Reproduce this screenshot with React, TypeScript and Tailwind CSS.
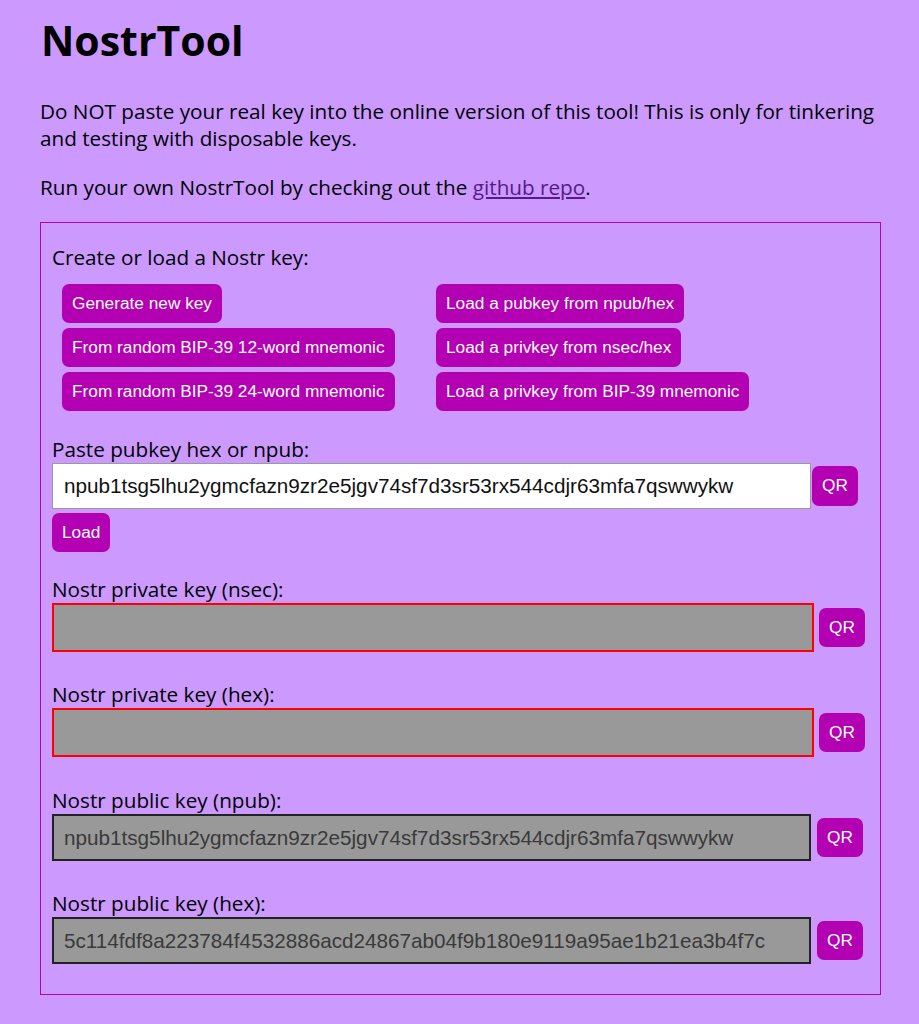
import React from "react";

const NPUB = "npub1tsg5lhu2ygmcfazn9zr2e5jgv74sf7d3sr53rx544cdjr63mfa7qswwykw";
const HEX = "5c114fdf8a223784f4532886acd24867ab04f9b180e9119a95ae1b21ea3b4f7c";

const btn =
	"inline-flex items-center rounded-[7px] bg-[#b300b3] px-[10px] text-[17.25px] text-white font-['Liberation_Sans',Arial,sans-serif] whitespace-nowrap";

const Btn = ({ label, className = "" }: { label: string; className?: string }) => (
	<button type="button" className={`${btn} h-[39px] ${className}`}>
		{label}
	</button>
);

const QrBtn = ({ className = "" }: { className?: string }) => (
	<button
		type="button"
		className={`${btn} h-[39px] w-[46px] justify-center px-0 text-[17.5px] ${className}`}
	>
		QR
	</button>
);

type KeyFieldProps = {
	label: string;
	value: string;
	kind: "private" | "public";
	mt: string;
};

const KeyField = ({ label, value, kind, mt }: KeyFieldProps) => {
	const isPrivate = kind === "private";
	return (
		<div className={mt}>
			<div className="leading-[27px]">{label}</div>
			<div className="flex items-center">
				<div
					className={`flex items-center bg-[#999999] pl-[10px] text-[20.7px] text-[#3a3a3a] font-['Liberation_Sans',Arial,sans-serif] border-2 ${
						isPrivate
							? "h-[49px] w-[762px] border-[#ff0000]"
							: "h-[47px] w-[759px] border-[#222222]"
					}`}
				>
					{value}
				</div>
				<QrBtn className={isPrivate ? "ml-[5px]" : "ml-[6px] w-[45px]"} />
			</div>
		</div>
	);
};

const App = () => {
	return (
		<div className="min-h-screen bg-[#cc99ff] px-[40px] pt-[12px] pb-[30px] text-black font-['Open_Sans',sans-serif] text-[20.7px]">
			<h1 className="pl-[1px] text-[41px] font-bold leading-[56px]">NostrTool</h1>

			<p className="mt-[30px] leading-[27px]">
				Do NOT paste your real key into the online version of this tool! This is only for
				tinkering and testing with disposable keys.
			</p>
			<p className="mt-[22px] leading-[27px]">
				Run your own NostrTool by checking out the{" "}
				<a href="#" className="text-[#551a8b] underline">
					github repo
				</a>
				.
			</p>

			<div className="mt-[21px] w-[841px] border border-[#b300b3] px-[11px] pt-[21px] pb-[30px]">
				<div className="leading-[27px]">Create or load a Nostr key:</div>

				<div className="mt-[13px] ml-[10px] grid grid-cols-[374px_auto]">
					<div className="flex flex-col items-start gap-[5px]">
						<Btn label="Generate new key" />
						<Btn label="From random BIP-39 12-word mnemonic" />
						<Btn label="From random BIP-39 24-word mnemonic" />
					</div>
					<div className="flex flex-col items-start gap-[5px]">
						<Btn label="Load a pubkey from npub/hex" />
						<Btn label="Load a privkey from nsec/hex" />
						<Btn label="Load a privkey from BIP-39 mnemonic" />
					</div>
				</div>

				<div className="mt-[25px]">
					<div className="leading-[27px]">Paste pubkey hex or npub:</div>
					<div className="flex items-center">
						<input
							readOnly
							value={NPUB}
							className="h-[46px] w-[759px] border border-[#9a9a9a] bg-white pl-[11px] text-[20.7px] text-[#111] outline-none font-['Liberation_Sans',Arial,sans-serif]"
						/>
						<QrBtn className="ml-[1px] w-[45px] h-[40px]" />
					</div>
					<Btn label="Load" className="mt-[4px]" />
				</div>

				<KeyField label="Nostr private key (nsec):" value="" kind="private" mt="mt-[24px]" />
				<KeyField label="Nostr private key (hex):" value="" kind="private" mt="mt-[29px]" />
				<KeyField label="Nostr public key (npub):" value={NPUB} kind="public" mt="mt-[30px]" />
				<KeyField label="Nostr public key (hex):" value={HEX} kind="public" mt="mt-[29px]" />
			</div>
		</div>
	);
};

export default App;
